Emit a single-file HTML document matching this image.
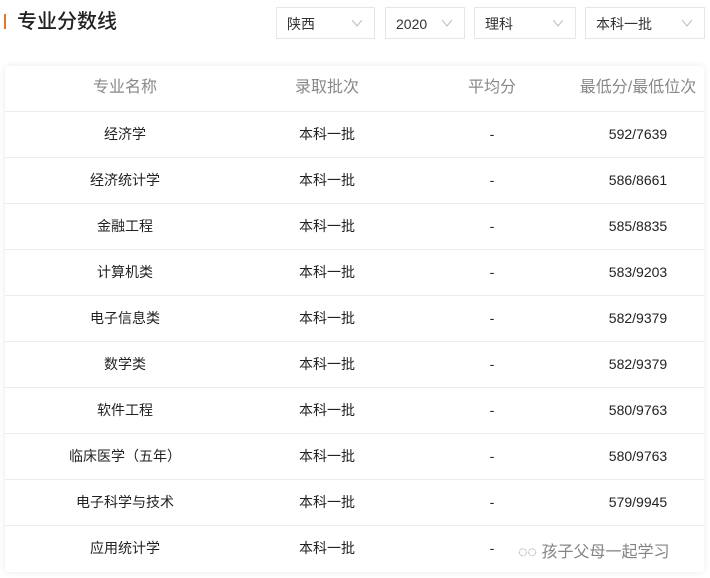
<!DOCTYPE html>
<html><head><meta charset="utf-8"><style>
body{margin:0;width:710px;height:578px;background:#fff;font-family:"Liberation Sans","Noto Sans CJK SC",sans-serif;position:relative;overflow:hidden}
.bar{position:absolute;left:4px;top:14px;width:2px;height:15px;background:#e8742a}
.title{position:absolute;left:17px;top:8px;font-size:20px;color:#222;line-height:28px;font-weight:500}
.dd{position:absolute;top:7px;height:32px;border:1px solid #e6e6e6;box-sizing:border-box;font-size:14px;color:#333;line-height:32px;padding-left:10px}
.dd svg{position:absolute;right:12px;top:12px}
.card{position:absolute;left:5px;top:66px;width:699px;height:506px;border-radius:4px;box-shadow:0 0 8px rgba(0,0,0,0.08);background:#fff}
.row{position:absolute;left:0;width:699px;height:46px;border-bottom:1px solid #ececec;box-sizing:border-box;font-size:14px;color:#222;line-height:44px}
.row span{position:absolute;width:200px;text-align:center}
.h{color:#888;font-size:16px}
.wm{position:absolute;left:518px;top:538px;font-size:16px;color:#666;opacity:.8}
</style></head><body>
<div class="bar"></div><div class="title">专业分数线</div>
<div class="dd" style="left:276px;width:99px">陕西<svg width="10" height="7"><path d="M0 0L5 6L10 0" fill="none" stroke="#bbb"/></svg></div>
<div class="dd" style="left:385px;width:80px">2020<svg width="10" height="7"><path d="M0 0L5 6L10 0" fill="none" stroke="#bbb"/></svg></div>
<div class="dd" style="left:474px;width:102px">理科<svg width="10" height="7"><path d="M0 0L5 6L10 0" fill="none" stroke="#bbb"/></svg></div>
<div class="dd" style="left:585px;width:120px">本科一批<svg width="10" height="7"><path d="M0 0L5 6L10 0" fill="none" stroke="#bbb"/></svg></div>
<div class="card">
<div class="row h" style="top:0"><span style="left:20px">专业名称</span><span style="left:222px">录取批次</span><span style="left:387px">平均分</span><span style="left:538px;width:190px">最低分/最低位次</span></div>
<div class="row" style="top:46px"><span style="left:20px">经济学</span><span style="left:222px">本科一批</span><span style="left:387px">-</span><span style="left:533px">592/7639</span></div>
<div class="row" style="top:92px"><span style="left:20px">经济统计学</span><span style="left:222px">本科一批</span><span style="left:387px">-</span><span style="left:533px">586/8661</span></div>
<div class="row" style="top:138px"><span style="left:20px">金融工程</span><span style="left:222px">本科一批</span><span style="left:387px">-</span><span style="left:533px">585/8835</span></div>
<div class="row" style="top:184px"><span style="left:20px">计算机类</span><span style="left:222px">本科一批</span><span style="left:387px">-</span><span style="left:533px">583/9203</span></div>
<div class="row" style="top:230px"><span style="left:20px">电子信息类</span><span style="left:222px">本科一批</span><span style="left:387px">-</span><span style="left:533px">582/9379</span></div>
<div class="row" style="top:276px"><span style="left:20px">数学类</span><span style="left:222px">本科一批</span><span style="left:387px">-</span><span style="left:533px">582/9379</span></div>
<div class="row" style="top:322px"><span style="left:20px">软件工程</span><span style="left:222px">本科一批</span><span style="left:387px">-</span><span style="left:533px">580/9763</span></div>
<div class="row" style="top:368px"><span style="left:20px">临床医学（五年）</span><span style="left:222px">本科一批</span><span style="left:387px">-</span><span style="left:533px">580/9763</span></div>
<div class="row" style="top:414px"><span style="left:20px">电子科学与技术</span><span style="left:222px">本科一批</span><span style="left:387px">-</span><span style="left:533px">579/9945</span></div>
<div class="row" style="top:460px;border-bottom:none"><span style="left:20px">应用统计学</span><span style="left:222px">本科一批</span><span style="left:387px">-</span></div>
</div>
<div class="wm">◌◌ 孩子父母一起学习</div>
</body></html>
